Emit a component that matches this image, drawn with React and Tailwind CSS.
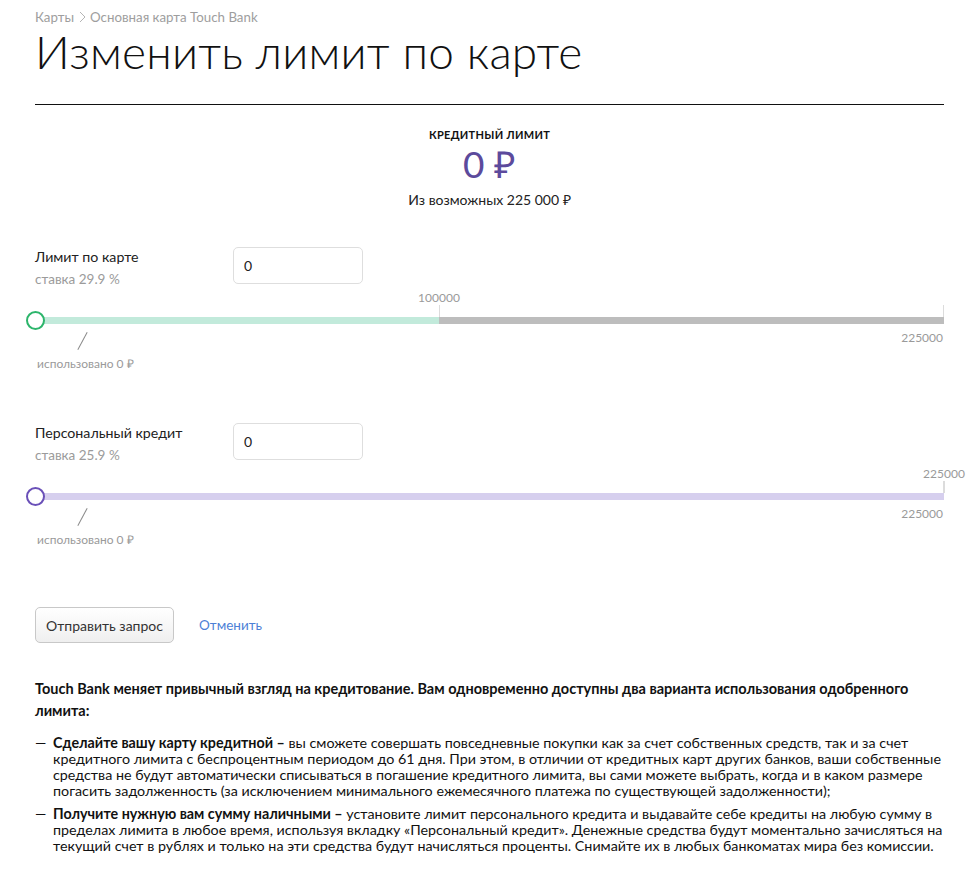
import React from "react";

const font = { fontFamily: "Lato, 'Open Sans', sans-serif" };

const Slider = ({ fill, rest, knob, topLabel, topAt, bottomLabel }) => {
  return (
    <div>
      <div className="relative h-[26px]">
        <span
          className="absolute top-0 text-[12px] leading-[14px] text-[#9a9a9a] -translate-x-1/2"
          style={{ left: topAt }}
        >
          {topLabel}
        </span>
        <span className="absolute bottom-0 h-[12px] w-px bg-[#dcdcdc]" style={{ left: topAt }} />
        <span className="absolute bottom-0 right-0 h-[12px] w-px bg-[#dcdcdc]" />
      </div>
      <div className="relative flex h-[7px]">
        <div className={fill} style={{ width: topAt }} />
        <div className={`flex-1 ${rest}`} />
        <span
          className={`absolute left-[-9px] top-[-6px] h-[19px] w-[19px] rounded-full border-2 bg-white ${knob}`}
        />
        <span className="absolute left-[47px] top-[14px] h-[20px] w-px rotate-[28deg] bg-[#8a8a8a]" />
      </div>
      <div className="flex justify-end pt-[7px] pr-[1px] text-[12px] leading-[14px] text-[#9a9a9a]">
        {bottomLabel}
      </div>
      <div className="mt-[11px] pl-[2px] text-[12px] text-[#9a9a9a] leading-[16px]">использовано 0 ₽</div>
    </div>
  );
};

const Field = ({ title, rate }) => (
  <div className="flex items-start">
    <div className="w-[198px]">
      <div className="text-[14.2px] leading-[18px] text-[#222]">{title}</div>
      <div className="text-[13.5px] leading-[16px] text-[#9b9b9b] mt-[5px]">{rate}</div>
    </div>
    <div className="mt-[-1px] flex h-[37px] w-[130px] items-center rounded-[5px] border border-[#dedede] px-[10px] text-[14px] text-[#222]">
      0
    </div>
  </div>
);

export default function App() {
  return (
    <div className="min-h-screen bg-white px-[35px] pt-[9px] pb-[20px] text-[#111]" style={font}>
      <div className="w-[909px]">
        <div className="flex items-center text-[13.3px] text-[#9e9e9e] leading-[16px]">
          <span>Карты</span>
          <svg width="10" height="12" viewBox="0 0 10 12" className="mx-[3px]">
            <path d="M3 1 L8 6 L3 11" fill="none" stroke="#b5b5b5" strokeWidth="1" />
          </svg>
          <span>Основная карта Touch Bank</span>
        </div>
        <h1 className="mt-[0px] text-[46px] font-light leading-[54px] tracking-[0.2px] text-[#111]">
          Изменить лимит по карте
        </h1>
        <div className="mt-[25px] h-px bg-[#111]" />

        <div className="mt-[23px] flex flex-col items-center">
          <div className="text-[11px] font-bold leading-[14px] tracking-[0.3px] text-[#111]">КРЕДИТНЫЙ ЛИМИТ</div>
          <div className="mt-[2px] text-[37px] leading-[40px] text-[#5c4a9c]">0 ₽</div>
          <div className="mt-[8px] text-[14px] leading-[16px] text-[#222]">Из возможных 225 000 ₽</div>
        </div>

        <div className="mt-[40px]">
          <Field title="Лимит по карте" rate="ставка 29.9 %" />
          <div className="mt-[4px]">
            <Slider
              fill="bg-[#c2eadb]"
              rest="bg-[#bdbdbd]"
              knob="border-[#2cb56b]"
              topLabel="100000"
              topAt={404}
              bottomLabel="225000"
            />
          </div>
        </div>

        <div className="mt-[52px]">
          <Field title="Персональный кредит" rate="ставка 25.9 %" />
          <div className="mt-[4px]">
            <Slider
              fill="bg-[#d6cfee]"
              rest="bg-[#d6cfee]"
              knob="border-[#6a50b8]"
              topLabel="225000"
              topAt={909}
              bottomLabel="225000"
            />
          </div>
        </div>

        <div className="mt-[59px] flex items-center">
          <button className="h-[36px] w-[139px] rounded-[5px] border border-[#c8c8c8] bg-gradient-to-b from-white to-[#efefef] text-[14px] text-[#333]">
            Отправить запрос
          </button>
          <a className="ml-[25px] text-[13.5px] text-[#4d7fd6]">Отменить</a>
        </div>

        <div className="mt-[35px] text-[14.5px] leading-[22px] text-[#111]">
          <p className="font-bold">
            Touch Bank меняет привычный взгляд на кредитование. Вам одновременно доступны два варианта использования одобренного лимита:
          </p>
          <ul className="mt-[13px] leading-[16px] text-[14.3px]">
            <li className="flex">
              <span className="w-[18px] shrink-0">—</span>
              <span>
                <b>Сделайте вашу карту кредитной –</b> вы сможете совершать повседневные покупки как за счет собственных средств, так и за счет кредитного лимита с беспроцентным периодом до 61 дня. При этом, в отличии от кредитных карт других банков, ваши собственные средства не будут автоматически списываться в погашение кредитного лимита, вы сами можете выбрать, когда и в каком размере погасить задолженность (за исключением минимального ежемесячного платежа по существующей задолженности);
              </span>
            </li>
            <li className="mt-[7px] flex">
              <span className="w-[18px] shrink-0">—</span>
              <span>
                <b>Получите нужную вам сумму наличными –</b> установите лимит персонального кредита и выдавайте себе кредиты на любую сумму в пределах лимита в любое время, используя вкладку «Персональный кредит». Денежные средства будут моментально зачисляться на текущий счет в рублях и только на эти средства будут начисляться проценты. Снимайте их в любых банкоматах мира без комиссии.
              </span>
            </li>
          </ul>
        </div>
      </div>
    </div>
  );
}
